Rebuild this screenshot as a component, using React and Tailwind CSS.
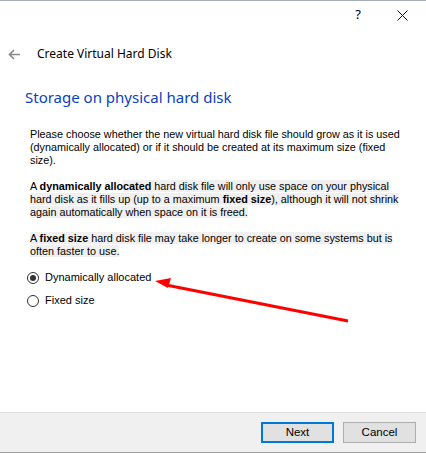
import React from 'react';

const body = { fontFamily: '"Liberation Sans", Arial, sans-serif' };
const ui = { fontFamily: '"Noto Sans", "Open Sans", sans-serif' };

function Radio({ checked, label }) {
  return (
    <div className="flex items-center h-[23px] pl-[27px]">
      <span className="w-[12px] h-[12px] rounded-full border border-[#333333] bg-white flex items-center justify-center">
        {checked && <span className="w-[6px] h-[6px] rounded-full bg-[#333333]" />}
      </span>
      <span className="ml-[6px] text-[11px] text-black" style={body}>{label}</span>
    </div>
  );
}

export default function App() {
  const hl = 'bg-[#f0f0f0]';
  return (
    <div className="relative w-[426px] h-[454px] bg-white flex flex-col border-t border-[#a5aeb7] overflow-hidden">
      {/* title bar */}
      <div className="h-[28px] flex items-center justify-end">
        <span className="text-[13px] text-black mr-[36px]" style={ui}>?</span>
        <svg width="11" height="11" viewBox="0 0 11 11" className="mr-[18px]">
          <path d="M0.5 0.5 L10.5 10.5 M10.5 0.5 L0.5 10.5" stroke="#111" strokeWidth="1" fill="none" />
        </svg>
      </div>

      {/* nav row */}
      <div className="h-[50px] flex items-center">
        <svg width="13" height="11" viewBox="0 0 13 11" className="ml-[8px]">
          <path d="M12 5.5 H1.5 M6 1 L1.5 5.5 L6 10" stroke="#8a8a8a" strokeWidth="1.6" fill="none" />
        </svg>
        <span className="ml-[16px] text-[12px] text-black" style={ui}>Create Virtual Hard Disk</span>
      </div>

      {/* heading */}
      <div className="h-[37px] flex items-center pl-[25px]">
        <span className="text-[15px] text-[#0a3fbf]" style={ui}>Storage on physical hard disk</span>
      </div>

      {/* description */}
      <div className="pt-[12px] pl-[30px] text-[10.8px] leading-[13px] text-black whitespace-nowrap" style={body}>
        <p>
          Please choose whether the new virtual hard disk file should grow as it is used<br />
          (dynamically allocated) or if it should be created at its maximum size (fixed<br />
          size).
        </p>
        <p className="mt-[13px]">
          A <b>dynamically allo</b><span className={hl}><b>cated</b> hard disk file will only use space on your physical</span><br />
          <span className={hl}>hard disk as it fills up (up to a maximum <b>fixed size</b>), although it will not shrink</span><br />
          <span className={hl}>again automatically when space on it is freed.</span>
        </p>
        <p className="mt-[13px]">
          <span className={hl}>A <b>fixed size</b> hard disk file may take longer to create on some systems but is</span><br />
          <span className={hl}>often faster to use.</span>
        </p>
      </div>

      {/* options */}
      <div className="mt-[8px]">
        <Radio checked label="Dynamically allocated" />
        <Radio label="Fixed size" />
      </div>

      <div className="flex-1" />

      {/* footer */}
      <div className="h-[41px] border-t border-[#dfdfdf] border-b border-b-[#a0a0a0] bg-[#f0f0f0] flex items-center justify-end pr-[10px] gap-[9px]">
        <button className="w-[73px] h-[21px] bg-[#e1e1e1] border-2 border-[#0078d7] text-[11.5px] text-black" style={body}>Next</button>
        <button className="w-[73px] h-[21px] bg-[#e1e1e1] border border-[#adadad] text-[11.5px] text-black" style={body}>Cancel</button>
      </div>
      <div className="h-[1px]" />

      {/* annotation arrow */}
      <svg className="absolute left-0 top-0 pointer-events-none" width="426" height="454" viewBox="0 0 426 454">
        <line x1="348" y1="320" x2="166" y2="284" stroke="#ff0000" strokeWidth="3" />
        <polygon points="155,280 171,277 168,287" fill="#ff0000" />
      </svg>
    </div>
  );
}
